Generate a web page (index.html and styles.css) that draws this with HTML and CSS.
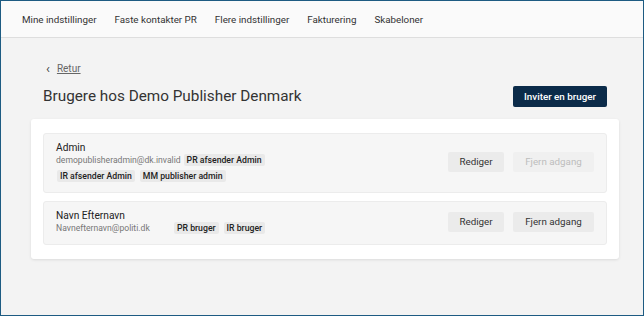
FILE: index.html
```html
<!DOCTYPE html>
<html lang="da">
<head>
    <meta charset="UTF-8">
    <meta name="viewport" content="width=device-width, initial-scale=1.0">
    <title>Brugere</title>
    <link rel="stylesheet" href="styles.css">
</head>
<body>
    <nav class="topnav">
        <a href="#">Mine indstillinger</a>
        <a href="#">Faste kontakter PR</a>
        <a href="#">Flere indstillinger</a>
        <a href="#">Fakturering</a>
        <a href="#">Skabeloner</a>
    </nav>

    <main class="page">
        <div class="page-head">
            <a class="back-link" href="#"><span class="chev">&#8249;</span><span class="back-text">Retur</span></a>
            <div class="title-row">
                <h1>Brugere hos Demo Publisher Denmark</h1>
                <button class="btn-primary">Inviter en bruger</button>
            </div>
        </div>

        <div class="card">
            <div class="user-row">
                <div class="user-info">
                    <div class="user-name">Admin</div>
                    <div class="user-meta">
                        <span class="user-email">demopublisheradmin@dk.invalid</span>
                        <span class="tag">PR afsender Admin</span>
                        <span class="tag">IR afsender Admin</span>
                        <span class="tag">MM publisher admin</span>
                    </div>
                </div>
                <div class="user-actions">
                    <button class="btn btn-edit">Rediger</button>
                    <button class="btn btn-remove" disabled>Fjern adgang</button>
                </div>
            </div>

            <div class="user-row">
                <div class="user-info">
                    <div class="user-name">Navn Efternavn</div>
                    <div class="user-meta">
                        <span class="user-email">Navnefternavn@politi.dk</span>
                        <span class="tag">PR bruger</span>
                        <span class="tag">IR bruger</span>
                    </div>
                </div>
                <div class="user-actions">
                    <button class="btn btn-edit">Rediger</button>
                    <button class="btn btn-remove">Fjern adgang</button>
                </div>
            </div>
        </div>
    </main>
</body>
</html>
```

FILE: styles.css
```css
* {
    box-sizing: border-box;
}

body {
    font-family: Roboto, "Liberation Sans", sans-serif;
    background-color: #f3f3f3;
    color: #333;
    margin: 0;
    height: 316px;
    border: 1px solid #1d5b82;
    overflow: hidden;
}

/* top menu */
.topnav {
    display: flex;
    align-items: center;
    gap: 18px;
    height: 37px;
    padding-left: 21px;
    background-color: #fafafa;
    border-bottom: 1px solid #dedede;
}

.topnav a {
    font-size: 9.8px;
    color: #333;
    text-decoration: none;
}

.page {
    padding: 0 24px 0 30px;
}

.page-head {
    padding: 20px 12px 12px;
}

.back-link {
    display: inline-flex;
    align-items: center;
    gap: 7px;
    font-size: 10px;
    line-height: 14px;
    height: 14px;
    color: #666;
    text-decoration: none;
}

.back-link .chev {
    font-size: 13px;
    line-height: 14px;
    color: #444;
    padding-left: 3px;
}

.back-link .back-text {
    text-decoration: underline;
}

.title-row {
    display: flex;
    justify-content: space-between;
    align-items: center;
    margin-top: 9px;
}

.title-row h1 {
    margin: 0;
    font-size: 15.3px;
    font-weight: 400;
    color: #333;
    line-height: 21px;
}

button {
    font-family: inherit;
    border: none;
    border-radius: 2px;
    cursor: pointer;
}

.btn-primary {
    background-color: #0b2b49;
    color: #fff;
    font-size: 9.8px;
    font-weight: 500;
    height: 21px;
    width: 94px;
    padding: 0;
}

.card {
    background-color: #fff;
    border-radius: 3px;
    box-shadow: 0 1px 3px rgba(0, 0, 0, 0.1);
    padding: 14px 12px;
    display: flex;
    flex-direction: column;
    gap: 8px;
}

.user-row {
    display: flex;
    justify-content: space-between;
    align-items: center;
    background-color: #f6f6f6;
    border: 1px solid #ececec;
    border-radius: 3px;
    padding: 7px 12px 10px;
}

.user-info {
    width: 230px;
}

.user-name {
    font-size: 10.2px;
    line-height: 13px;
    color: #222;
}

.user-meta {
    display: flex;
    flex-wrap: wrap;
    align-items: center;
    gap: 4px 3px;
    margin-left: -1px;
}

.user-email {
    min-width: 116px;
    font-size: 8.6px;
    line-height: 12px;
    color: #777;
    padding-left: 1px;
}

.tag {
    background-color: #e9e9e9;
    border-radius: 2px;
    padding: 0 3px;
    font-size: 8.7px;
    font-weight: 500;
    line-height: 12px;
    color: #222;
}

.tag + .tag {
    margin-left: 2px;
}

.user-actions {
    display: flex;
    gap: 9px;
}

.btn {
    background-color: #ebebeb;
    color: #333;
    font-size: 9.8px;
    height: 20px;
    padding: 0;
}

.btn-edit {
    width: 56px;
}

.btn-remove {
    width: 81px;
}

.btn:disabled {
    background-color: #f0f0f0;
    color: #bdbdbd;
    cursor: default;
}
```
